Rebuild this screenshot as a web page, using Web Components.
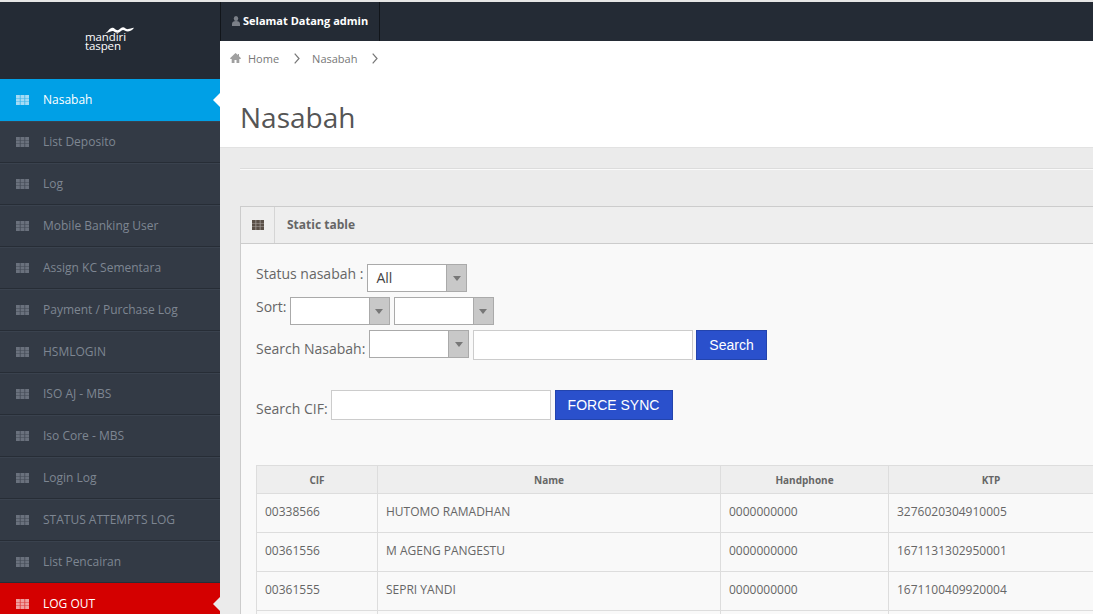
<!DOCTYPE html>
<html><head><meta charset="utf-8">
<style>
html,body{margin:0;padding:0;height:614px;width:1093px;overflow:hidden;background:#ebebeb;font-family:"Open Sans",sans-serif}
app-shell{display:flex;width:1093px;height:614px;overflow:hidden}
</style></head><body>
<app-shell>
  <side-bar>
    <nav-item active="blue">Nasabah</nav-item>
    <nav-item>List Deposito</nav-item>
    <nav-item>Log</nav-item>
    <nav-item>Mobile Banking User</nav-item>
    <nav-item>Assign KC Sementara</nav-item>
    <nav-item>Payment / Purchase Log</nav-item>
    <nav-item>HSMLOGIN</nav-item>
    <nav-item>ISO AJ - MBS</nav-item>
    <nav-item>Iso Core - MBS</nav-item>
    <nav-item>Login Log</nav-item>
    <nav-item>STATUS ATTEMPTS LOG</nav-item>
    <nav-item>List Pencairan</nav-item>
    <nav-item active="red">LOG OUT</nav-item>
  </side-bar>
  <main-area>
    <top-bar>Selamat Datang admin</top-bar>
    <page-head title-text="Nasabah"></page-head>
    <data-panel heading="Static table">
      <filter-form></filter-form>
      <data-table></data-table>
    </data-panel>
  </main-area>
</app-shell>
<script>
const GRID=(c,u,w=13,h=10)=>`<svg width="${w}" height="${h}" viewBox="0 0 13 10" preserveAspectRatio="none" style="display:block;flex:none"><rect width="13" height="10" fill="${u}"/><g fill="${c}">${[0,4.6,9.2].flatMap(x=>[0,3.5,7].map(y=>`<rect x="${x}" y="${y}" width="3.8" height="3"/>`)).join('')}</g></svg>`;
function def(name,html){customElements.define(name,class extends HTMLElement{constructor(){super();this.attachShadow({mode:'open'}).innerHTML=typeof html==='function'?html(this):html;}})}
def('app-shell','<style>:host{display:flex}</style><slot></slot>');
def('side-bar',`<style>:host{display:block;width:220px;flex:none;background:#333a45;border-top:2px solid #e6e6e6;box-sizing:border-box;height:614px;overflow:hidden}
.logo{height:77px;background:#242b35;display:flex;justify-content:center;align-items:flex-start;box-sizing:border-box;padding-top:25px;padding-right:2px;color:#fff}
.w{position:relative;width:49px;height:26px}
svg{position:absolute;left:20px;top:0}
.t{position:absolute;left:.5px;top:6px;font:500 11.500px/8.500px "Open Sans",sans-serif;letter-spacing:-.1px;color:#fff;white-space:nowrap}
</style><div class="logo"><div class="w"><svg width="29" height="7" viewBox="0 0 29 7"><path d="M0 6.500C2.500 5.500 4 1.500 7 .8c2.500-.5 3 2.300 5.500 2.400 2 0 3-2.800 5.500-2.900 2.200 0 2.500 2.200 5 1.800 2-.3 3.500-1 6-1.300-1.500 2-3 3.600-6 3.700-2.500.1-3.500-1.700-5-1.600-2 .2-3 2.900-5.700 2.900-2.500 0-3-2-5-1.800-2 .2-4 1.800-7.300 2.500z" fill="#fff"/></svg><div class="t">mandiri<br>taspen</div></div></div><slot></slot>`);
def('nav-item',h=>{const a=h.getAttribute('active');const bg=a==='blue'?'#00a0e6':a==='red'?'#d40000':'#333a45';const fg=a?'#fff':'#7e8692';const ic=a==='blue'?'#a5dbf5':a==='red'?'#f0a0a0':'#6a717d';const un=a==='blue'?'#3ab4ea':a==='red'?'#dc3a3a':'#434a55';
return `<style>:host{display:flex;align-items:center;height:42px;box-sizing:border-box;background:${bg};color:${fg};font:400 12px/1 "Open Sans",sans-serif;padding-left:16px;gap:14px;position:relative;${a?'':'border-top:1px solid #3a424e;border-bottom:1px solid #272d36;'}}
.a{position:absolute;right:0;top:14px;width:0;height:0;border:7px solid transparent;border-right-color:${a==='red'?'#ebebeb':'#fff'};border-left:0}</style>${GRID(ic,un)}<span><slot></slot></span>${a?'<i class="a"></i>':''}`});
def('main-area','<style>:host{display:flex;flex-direction:column;flex:1;min-width:0;height:614px;overflow:hidden}</style><slot></slot>');
def('top-bar',`<style>:host{display:flex;height:41px;box-sizing:border-box;background:#242b35;border-top:2px solid #e6e6e6;flex:none}
.b{display:flex;align-items:center;gap:3px;height:39px;box-sizing:border-box;padding:0 11px 2px 11px;border-left:1px solid #11151a;border-right:1px solid #11151a;font:700 11px "Open Sans",sans-serif;color:#fff}</style>
<div class="b"><svg width="8" height="10" viewBox="0 0 9 10" preserveAspectRatio="none"><circle cx="4.500" cy="2.500" r="2.500" fill="#7b8088"/><path d="M0 10V8c0-2 1.500-3 4.500-3S9 6 9 8v2z" fill="#7b8088"/></svg><span><slot></slot></span></div>`);
def('page-head',h=>`<style>:host{display:block;background:#fff;height:107px;flex:none;box-sizing:border-box;border-bottom:1px solid #e2e2e2;color:#555}
.c{display:flex;align-items:center;height:34px;padding-left:10px;font:400 11px "Open Sans",sans-serif;color:#777}
.c b{font-weight:400;margin-left:7px}.c svg.ch{margin:0 12px 0 15px}.c svg.l{margin-left:15px}
h1{margin:23px 0 0 20px;font:400 28px/38px "Open Sans",sans-serif;color:#555}</style>
<div class="c"><svg width="11" height="10" viewBox="0 0 11 10"><path d="M5.500 0L0 5.200l.6.700h1.100V10h2.800V7h2v3h2.800V5.900h1.100l.6-.7-2-1.900V1H8v1z" fill="#a0a0a0"/></svg><b>Home</b><svg class="ch" width="6" height="11" viewBox="0 0 6 11"><path d="M.7.700L5 5.500.7 10.300" fill="none" stroke="#777" stroke-width="1.200"/></svg><span>Nasabah</span><svg class="ch l" width="6" height="11" viewBox="0 0 6 11"><path d="M.7.700L5 5.500.7 10.300" fill="none" stroke="#777" stroke-width="1.200"/></svg></div>
<h1>${h.getAttribute('title-text')}</h1>`);
def('data-panel',h=>`<style>:host{display:block;width:1000px;margin:20px 0 0 20px;flex:none}
hr{border:0;border-top:1px solid #dcdcdc;border-bottom:1px solid #fafafa;margin:0 0 36px 0;height:0}
.p{border:1px solid #ccc;background:#f9f9f9}
.h{display:flex;background:#eeeeee;border-bottom:1px solid #ccc;font:700 12px "Open Sans",sans-serif;color:#666;align-items:center;box-sizing:border-box;height:37px}
.t{padding-bottom:2px}
.i{width:33px;height:36px;display:flex;align-items:center;justify-content:center;border-right:1px solid #d5d5d5;margin-right:12px}
.b{padding:20px 15px 0}</style><hr><div class="p"><div class="h"><div class="i">${GRID('#5a5048','#a8a39f',12)}</div><span class="t">${h.getAttribute('heading')}</span></div><div class="b"><slot></slot></div></div>`);
def('fake-select',h=>`<style>:host{display:inline-flex;width:100px;height:28px;box-sizing:border-box;border:1px solid #aaa;background:#fff;font:400 14px "Open Sans",sans-serif;color:#444;vertical-align:top}
.v{flex:1;padding-left:8px;line-height:26px}.d{width:19px;background:#c8c8c8;border-left:1px solid #aaa;display:flex;align-items:center;justify-content:center}
.d i{width:0;height:0;border:4px solid transparent;border-top:5px solid #777;border-bottom:0}</style><div class="v"><slot></slot></div><div class="d"><i></i></div>`);
def('text-box',h=>`<style>:host{display:inline-block;height:30px;box-sizing:border-box;border:1px solid #ccc;background:#fff;width:${h.getAttribute('w')}px;vertical-align:top}</style>`);
def('blue-btn',`<style>:host{display:inline-block;height:30px;box-sizing:border-box;background:#2a50cc;border:1px solid #2344ad;color:#fff;font:400 14px/28px "Liberation Sans",sans-serif;padding:0 12px;vertical-align:top}</style><slot></slot>`);
def('filter-form',`<style>:host{display:block;font:400 14px "Open Sans",sans-serif;color:#666;height:201px}
.r{display:flex;align-items:flex-start}.l{white-space:pre;margin-right:3px}</style>
<div class="r" style="height:33px"><span class="l" style="line-height:20px;margin-right:4px">Status nasabah :</span><fake-select>All</fake-select></div>
<div class="r" style="height:33px"><span class="l" style="line-height:20px">Sort:</span><fake-select></fake-select><fake-select style="margin-left:4px"></fake-select></div>
<div class="r" style="height:60px"><span class="l" style="line-height:38px;margin-right:4px">Search Nasabah:</span><fake-select></fake-select><text-box w="220" style="margin:0 3px 0 4px"></text-box><blue-btn>Search</blue-btn></div>
<div class="r"><span class="l" style="line-height:38px">Search CIF:</span><text-box w="220" style="margin-right:4px"></text-box><blue-btn style="padding-right:13px">FORCE SYNC</blue-btn></div>`);
def('data-table',()=>{const rows=[['00338566','HUTOMO RAMADHAN','0000000000','3276020304910005'],['00361556','M AGENG PANGESTU','0000000000','1671131302950001'],['00361555','SEPRI YANDI','0000000000','1671100409920004'],['','','','']];
return `<style>:host{display:block}table{border-collapse:collapse;table-layout:fixed;width:1000px;font:400 12px "Open Sans",sans-serif;color:#666}
td,th{border:1px solid #ddd;padding:0 8px 3px;text-align:left;height:39px;box-sizing:border-box}
th{height:28px;padding:0 8px;background:#eee;font-size:10px;font-weight:700;text-align:center;color:#666}</style>
<table><colgroup><col style="width:121px"><col style="width:343px"><col style="width:168px"><col style="width:205px"><col></colgroup>
<tr><th>CIF</th><th>Name</th><th>Handphone</th><th>KTP</th><th></th></tr>
${rows.map(r=>`<tr>${r.map(c=>`<td>${c}</td>`).join('')}<td></td></tr>`).join('')}</table>`});
</script>
</body></html>
